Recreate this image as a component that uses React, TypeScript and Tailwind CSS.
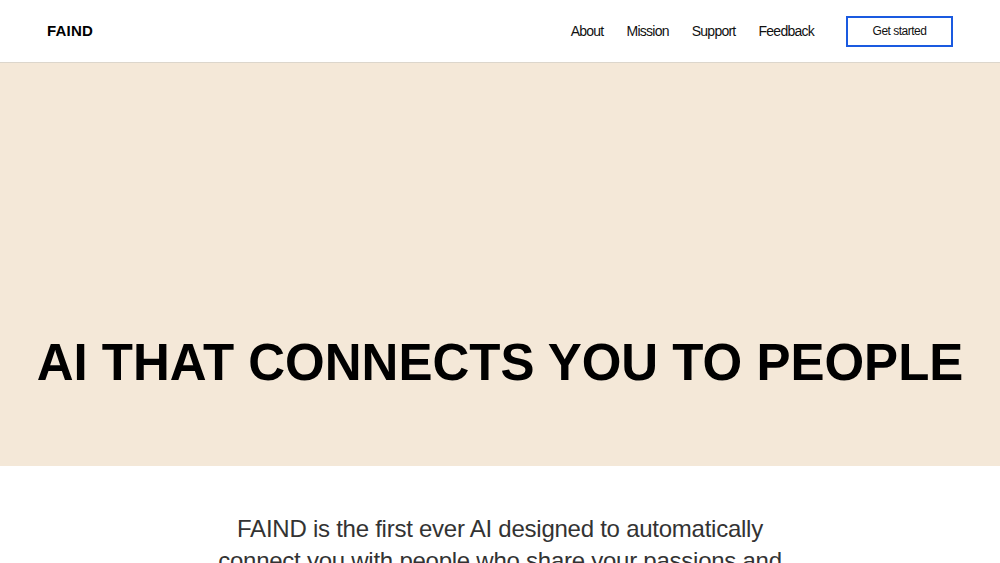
const navItems = ['About', 'Mission', 'Support', 'Feedback']

export default function App() {
  return (
    <div className="min-h-screen bg-white font-['Liberation_Sans',Arial,sans-serif]">
      {/* Header */}
      <header className="h-[63px] flex items-center justify-between pl-[47px] pr-[47px] border-b border-[#dcd6cc] bg-white">
        <a href="#" className="text-[15px] font-bold text-black tracking-[0.2px]">
          FAIND
        </a>
        <nav className="flex items-center">
          <div className="flex items-center gap-[23px] mr-[32px]">
            {navItems.map((item) => (
              <a key={item} href="#" className="text-[14px] tracking-[-0.75px] text-[#111]">
                {item}
              </a>
            ))}
          </div>
          <a
            href="#"
            className="w-[107px] h-[31px] flex items-center justify-center border-2 border-[#1a5ae0] text-[12px] tracking-[-0.5px] text-[#111]"
          >
            Get started
          </a>
        </nav>
      </header>

      {/* Hero */}
      <section className="h-[403px] bg-[#f4e8d8] flex items-end justify-center pb-[72px]">
        <h1 className="text-[51px] leading-[62px] font-bold text-black whitespace-nowrap">
          AI THAT CONNECTS YOU TO PEOPLE
        </h1>
      </section>

      {/* Intro */}
      <section className="pt-[47px] flex justify-center">
        <p className="max-w-[580px] text-center text-[24px] leading-[32px] tracking-[-0.25px] text-[#333]">
          FAIND is the first ever AI designed to automatically connect you with people who share your passions and
          interests.
        </p>
      </section>
    </div>
  )
}
